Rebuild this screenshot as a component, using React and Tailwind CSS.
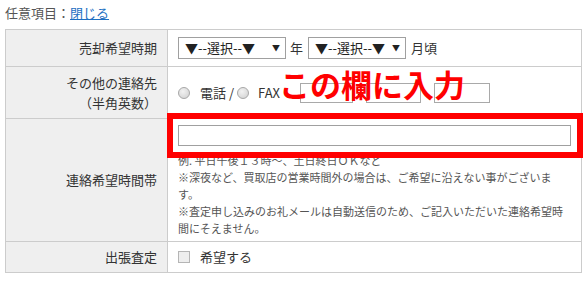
import React from 'react';

const Radio = () => (
  <span className="inline-block w-[12px] h-[12px] rounded-full border border-[#a8a8a8] bg-[radial-gradient(circle_at_40%_35%,#f2f2f2,#cfcfcf)]" />
);

const FakeSelect = ({ width }) => (
  <div
    className="h-[22px] border border-[#a0a0a0] bg-white flex items-center justify-between pl-[6px] pr-[5px] text-[13px] text-[#222]"
    style={{ width }}
  >
    <span>▼--選択--▼</span>
    <span className="text-[8px] leading-none">▼</span>
  </div>
);

const TextBox = ({ w }) => (
  <div className="h-[20px] border border-[#a9a9a9] bg-white" style={{ width: w }} />
);

const App = () => {
  return (
    <div className="relative w-[588px] h-[281px] bg-white text-[#333] font-['Noto_Sans_CJK_JP','Noto_Sans',sans-serif] overflow-hidden">
      <div className="pl-[5px] pt-[4px] text-[13px] leading-[18px] text-[#555]">
        任意項目：<span className="text-[#1d6fc2] underline">閉じる</span>
      </div>

      <table className="ml-[5px] mt-[7px] w-[577px] border-collapse text-[13px]">
        <tbody>
          <tr className="h-[37px]">
            <th className="w-[162px] border border-[#cccccc] bg-[#efefef] font-normal text-right pr-[10px]">
              売却希望時期
            </th>
            <td className="border border-[#cccccc] pl-[10px]">
              <div className="flex items-center">
                <FakeSelect width={108} />
                <span className="ml-[4px] mr-[5px]">年</span>
                <FakeSelect width={98} />
                <span className="ml-[5px]">月頃</span>
              </div>
            </td>
          </tr>
          <tr className="h-[52px]">
            <th className="border border-[#cccccc] bg-[#efefef] font-normal text-right pr-[10px] leading-[20px]">
              その他の連絡先<br />（半角英数）
            </th>
            <td className="border border-[#cccccc] pl-[10px]">
              <div className="flex items-center pt-[1px]">
                <Radio />
                <span className="ml-[10px]">電話 /</span>
                <span className="ml-[3px] flex"><Radio /></span>
                <span className="ml-[9px]">FAX</span>
                <span className="ml-[20px]"><TextBox w={53} /></span>
                <span className="w-[13px] text-center">-</span>
                <TextBox w={55} />
                <span className="w-[13px] text-center">-</span>
                <TextBox w={56} />
              </div>
            </td>
          </tr>
          <tr>
            <th className="border border-[#cccccc] bg-[#efefef] font-normal text-right pr-[10px]">
              連絡希望時間帯
            </th>
            <td className="border border-[#cccccc] pl-[10px] pr-[10px] pt-[6px] pb-[4px] align-top">
              <div className="w-[393px] h-[21px] border border-[#a0a0a0] bg-white" />
              <div className="mt-[6px] text-[11px] leading-[17px] text-[#555] whitespace-nowrap">
                例. 平日午後１３時～、土日終日ＯＫなど<br />
                ※深夜など、買取店の営業時間外の場合は、ご希望に沿えない事がございま<br />
                す。<br />
                ※査定申し込みのお礼メールは自動送信のため、ご記入いただいた連絡希望時<br />
                間にそえません。
              </div>
            </td>
          </tr>
          <tr className="h-[31px]">
            <th className="border border-[#cccccc] bg-[#efefef] font-normal text-right pr-[10px]">
              出張査定
            </th>
            <td className="border border-[#cccccc] pl-[10px]">
              <div className="flex items-center">
                <span className="inline-block w-[12px] h-[12px] border border-[#b5b5b5] bg-[#eeeeee]" />
                <span className="ml-[10px]">希望する</span>
              </div>
            </td>
          </tr>
        </tbody>
      </table>

      <div className="absolute left-[167px] top-[113px] w-[416px] h-[45px] border-[6px] border-[#ff0000]" />
      <div className="absolute left-[279px] top-[68px] text-[31px] leading-none font-bold text-[#ff0000] tracking-[0px]">
        この欄に入力
      </div>
    </div>
  );
};

export default App;
